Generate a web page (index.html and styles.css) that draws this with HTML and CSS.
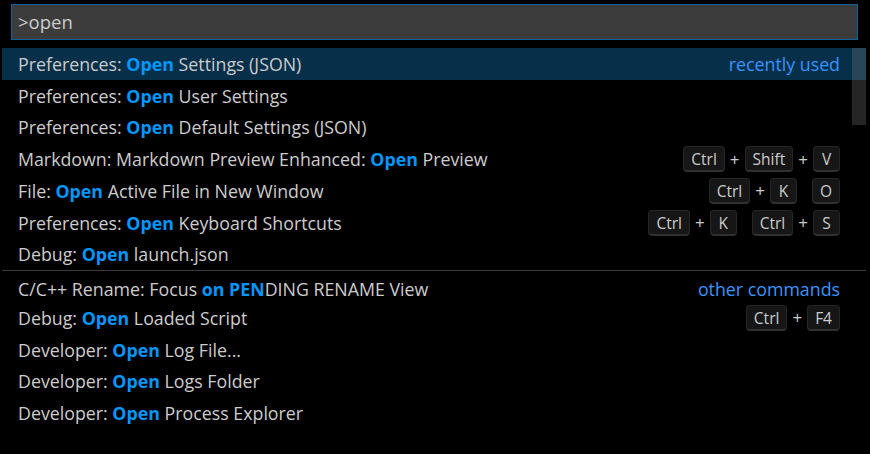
FILE: index.html
```html
<!DOCTYPE html>
<html>
<head>
<meta charset="utf-8">
<link rel="stylesheet" href="styles.css">
</head>
<body>
<div class="quick">
  <div class="input-wrap">
    <div class="input">&gt;open</div>
  </div>
  <div class="list">
    <div class="row selected">
      <span class="label">Preferences: <b>Open</b> Settings (JSON)</span>
      <span class="desc">recently used</span>
    </div>
    <div class="row">
      <span class="label">Preferences: <b>Open</b> User Settings</span>
    </div>
    <div class="row">
      <span class="label">Preferences: <b>Open</b> Default Settings (JSON)</span>
    </div>
    <div class="row">
      <span class="label">Markdown: Markdown Preview Enhanced: <b>Open</b> Preview</span>
      <span class="keys"><kbd>Ctrl</kbd><i>+</i><kbd>Shift</kbd><i>+</i><kbd>V</kbd></span>
    </div>
    <div class="row">
      <span class="label">File: <b>Open</b> Active File in New Window</span>
      <span class="keys"><kbd>Ctrl</kbd><i>+</i><kbd>K</kbd><span class="chord"></span><kbd>O</kbd></span>
    </div>
    <div class="row">
      <span class="label">Preferences: <b>Open</b> Keyboard Shortcuts</span>
      <span class="keys"><kbd>Ctrl</kbd><i>+</i><kbd>K</kbd><span class="chord"></span><kbd>Ctrl</kbd><i>+</i><kbd>S</kbd></span>
    </div>
    <div class="row">
      <span class="label">Debug: <b>Open</b> launch.json</span>
    </div>
    <div class="row separator">
      <span class="label">C/C++ Rename: Focus <b>on</b> <b>PEN</b>DING RENAME View</span>
      <span class="desc">other commands</span>
    </div>
    <div class="row">
      <span class="label">Debug: <b>Open</b> Loaded Script</span>
      <span class="keys"><kbd>Ctrl</kbd><i>+</i><kbd>F4</kbd></span>
    </div>
    <div class="row">
      <span class="label">Developer: <b>Open</b> Log File...</span>
    </div>
    <div class="row">
      <span class="label">Developer: <b>Open</b> Logs Folder</span>
    </div>
    <div class="row">
      <span class="label">Developer: <b>Open</b> Process Explorer</span>
    </div>
    <div class="scrollbar"></div>
  </div>
</div>
</body>
</html>
```
FILE: styles.css
```css
html, body {
  margin: 0;
  padding: 0;
  background: #000;
  width: 870px;
  height: 454px;
  overflow: hidden;
}
body {
  font-family: "Open Sans", "Noto Sans", sans-serif;
  color: #cccccc;
}
.quick {
  padding: 4px 4px 0 2px;
}
.input-wrap {
  padding: 0 8px 0 9px;
}
.input {
  height: 34px;
  border: 1px solid #0e639c;
  background: #3c3c3c;
  color: #cccccc;
  font-size: 18.5px;
  line-height: 33px;
  padding-left: 6px;
}
.list {
  position: relative;
  margin-top: 8px;
}
.row {
  height: 31.75px;
  display: flex;
  align-items: center;
  justify-content: space-between;
  padding: 0 26px 0 16px;
  font-size: 17.8px;
  white-space: nowrap;
  box-sizing: border-box;
}
.row.selected {
  background: #062f4a;
}
.row.separator {
  border-top: 1px solid #3c3c3c;
  padding-top: 4px;
}
.label b {
  color: #0097fb;
  font-weight: 700;
}
.desc {
  color: #3794ff;
}
.keys {
  display: flex;
  align-items: center;
}
kbd {
  font-family: inherit;
  font-size: 15.5px;
  background: rgba(128,128,128,0.17);
  border: 1px solid rgba(51,51,51,0.6);
  border-bottom-color: rgba(68,68,68,0.6);
  box-shadow: inset 0 -1px 0 rgba(68,68,68,0.6);
  border-radius: 4px;
  color: #cccccc;
  height: 26px;
  line-height: 24px;
  padding: 0 7px;
  box-sizing: border-box;
  display: inline-block;
  text-align: center;
  min-width: 27px;
}
.keys i {
  font-style: normal;
  padding: 0 5px;
  font-size: 17px;
}
.chord {
  display: inline-block;
  width: 15px;
}
.scrollbar {
  position: absolute;
  top: 0;
  right: 0;
  width: 14px;
  height: 77px;
  background: rgba(121,121,121,0.3);
}
```
